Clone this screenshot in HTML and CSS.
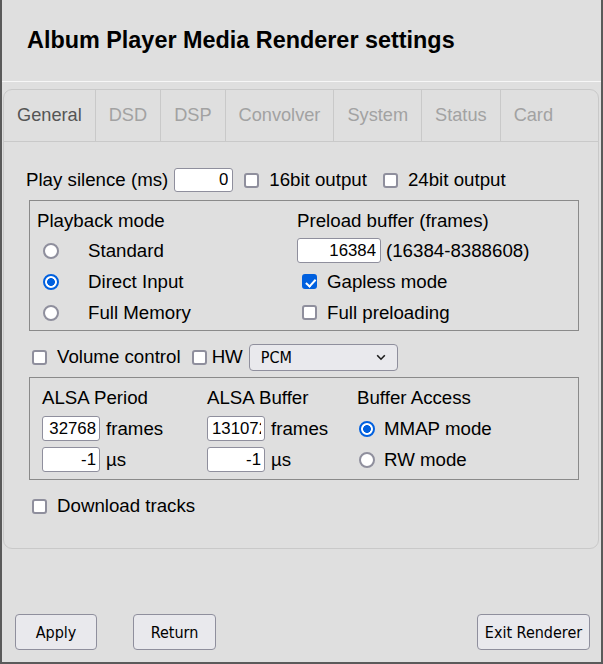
FILE: index.html
```html
<!DOCTYPE html>
<html lang="en">

<head>
    <meta charset="UTF-8">
    <meta name="viewport" content="width=device-width, initial-scale=1.0">
    <title>Album Player Media Renderer settings</title>
    <link rel="stylesheet" href="styles.css">
</head>

<body>
    <div class="window">
        <div class="head">
            <h1>Album Player Media Renderer settings</h1>
        </div>

        <div class="panel">
            <ul class="tabs">
                <li class="active">General</li>
                <li>DSD</li>
                <li>DSP</li>
                <li>Convolver</li>
                <li>System</li>
                <li>Status</li>
                <li>Card</li>
            </ul>

            <form class="page" id="generalForm">
                <div class="row first">
                    <label for="silence">Play silence (ms)</label>
                    <input type="text" class="num silence" id="silence" name="silence" value="0">
                    <label class="check"><input type="checkbox" name="out16"> 16bit output</label>
                    <label class="check"><input type="checkbox" name="out24"> 24bit output</label>
                </div>

                <div class="box playback">
                    <div class="cell">Playback mode</div>
                    <div class="cell">Preload buffer (frames)</div>

                    <label class="opt"><input type="radio" name="mode" value="standard"> Standard</label>
                    <div class="cell">
                        <input type="text" class="num preload" name="preload" value="16384">
                        <span class="range">(16384-8388608)</span>
                    </div>

                    <label class="opt"><input type="radio" name="mode" value="direct" checked> Direct Input</label>
                    <label class="check"><input type="checkbox" name="gapless" checked> Gapless mode</label>

                    <label class="opt"><input type="radio" name="mode" value="memory"> Full Memory</label>
                    <label class="check"><input type="checkbox" name="fullpreload"> Full preloading</label>
                </div>

                <div class="row volume">
                    <label class="check"><input type="checkbox" name="volume"> Volume control</label>
                    <label class="check hw"><input type="checkbox" name="hw"> HW</label>
                    <span class="select-wrap">
                        <select name="mixer">
                            <option>PCM</option>
                            <option>Master</option>
                            <option>Digital</option>
                        </select>
                        <svg class="chev" width="10" height="7" viewBox="0 0 10 7">
                            <path d="M1.2 1.2 L5 5.2 L8.8 1.2" fill="none" stroke="#1b1b1b" stroke-width="1.6" />
                        </svg>
                    </span>
                </div>

                <div class="box alsa">
                    <div class="cell">ALSA Period</div>
                    <div class="cell">ALSA Buffer</div>
                    <div class="cell">Buffer Access</div>

                    <div class="cell">
                        <input type="text" class="num small" name="period" value="32768"> frames
                    </div>
                    <div class="cell">
                        <input type="text" class="num small" name="buffer" value="131072"> frames
                    </div>
                    <label class="opt access"><input type="radio" name="access" value="mmap" checked> MMAP mode</label>

                    <div class="cell">
                        <input type="text" class="num small" name="periodus" value="-1"> µs
                    </div>
                    <div class="cell">
                        <input type="text" class="num small" name="bufferus" value="-1"> µs
                    </div>
                    <label class="opt access"><input type="radio" name="access" value="rw"> RW mode</label>
                </div>

                <div class="row download">
                    <label class="check"><input type="checkbox" name="download"> Download tracks</label>
                </div>
            </form>
        </div>

        <div class="actions">
            <button type="button" class="apply">Apply</button>
            <button type="button" class="return">Return</button>
            <button type="button" class="exit">Exit Renderer</button>
        </div>
    </div>
</body>

</html>
```

FILE: styles.css
```css
body {
    margin: 0;
    background-color: #dfdfdf;
    font-family: "Liberation Sans", Arial, sans-serif;
    font-size: 18.7px;
    color: #000;
}

.window {
    height: 100vh;
    box-sizing: border-box;
    border: 2px solid #5a5a5a;
    border-top: none;
    display: flex;
    flex-direction: column;
}

.head {
    height: 81px;
    flex-shrink: 0;
    display: flex;
    align-items: center;
    padding-left: 25px;
    border-bottom: 1px solid #f7f7f7;
}

.head h1 {
    margin: 0;
    font-size: 23.4px;
    font-weight: bold;
}

/* tabbed panel */
.panel {
    margin: 7px 2px 0 1px;
    border: 1px solid #c9c9c9;
    border-radius: 9px;
}

.tabs {
    display: flex;
    list-style: none;
    margin: 0;
    padding: 0;
    height: 51px;
    border-bottom: 1px solid #c9c9c9;
}

.tabs li {
    display: flex;
    align-items: center;
    padding: 0 13px;
    border-right: 1px solid #c9c9c9;
    color: #a2a2a2;
    font-size: 18.2px;
    cursor: pointer;
}

.tabs li.active {
    color: #555;
}

.tabs li:last-child {
    border-right: none;
}

.page {
    margin: 0;
    padding: 25px 20px 29px 22px;
}

.row {
    display: flex;
    align-items: center;
    height: 26px;
}

/* form controls */
.num {
    box-sizing: border-box;
    height: 24px;
    margin: 0;
    padding: 0 4px;
    border: 1px solid #8f8f9d;
    border-radius: 3px;
    background: #fff;
    font-family: "Liberation Sans", Arial, sans-serif;
    font-size: 16.8px;
    text-align: right;
    color: #000;
}

.check,
.opt {
    display: flex;
    align-items: center;
}

input[type="checkbox"],
input[type="radio"] {
    appearance: none;
    -webkit-appearance: none;
    position: relative;
    margin: 0;
    flex-shrink: 0;
    box-sizing: border-box;
    background: #fff;
    border: 2px solid #8f8f9d;
}

input[type="checkbox"] {
    width: 15px;
    height: 15px;
    border-radius: 3px;
    margin-right: 10px;
}

input[type="checkbox"]:checked {
    background: #0060df;
    border-color: #0060df;
}

input[type="checkbox"]:checked::after {
    content: "";
    position: absolute;
    left: 3.5px;
    top: 0.5px;
    width: 3.5px;
    height: 7.5px;
    border: solid #fff;
    border-width: 0 2px 2px 0;
    transform: rotate(42deg);
}

input[type="radio"] {
    width: 16px;
    height: 16px;
    border-radius: 50%;
}

input[type="radio"]:checked {
    border-color: #0060df;
    background: radial-gradient(circle, #0060df 0 3.6px, #fff 4.2px);
}

.first .silence {
    width: 59px;
    margin-left: 6px;
}

.first .check {
    margin-left: 11px;
}

.first .check + .check {
    margin-left: 16px;
}

/* framed groups */
.box {
    display: grid;
    box-sizing: border-box;
    width: 550px;
    margin-left: 3px;
    border: 1px solid #8a8a8a;
}

.cell {
    display: flex;
    align-items: center;
}

.playback {
    margin-top: 7px;
    padding: 5px 0 2px 7px;
    grid-template-columns: 260px 1fr;
    grid-template-rows: 29px 31px 31px 31px;
}

.playback .opt input {
    margin: 0 29px 0 6px;
}

.playback .check input {
    margin-left: 5px;
}

.preload {
    width: 84px;
    height: 25px;
}

.range {
    margin-left: 5px;
}

.volume {
    margin-top: 13px;
}

.volume .check input,
.download .check input {
    margin-left: 6px;
}

.volume .hw {
    margin-left: 5px;
}

.volume .hw input {
    margin-right: 5px;
}

.select-wrap {
    position: relative;
    margin-left: 6px;
}

.select-wrap select {
    appearance: none;
    -webkit-appearance: none;
    display: block;
    box-sizing: border-box;
    width: 149px;
    height: 27px;
    padding: 0 0 0 11px;
    border: 1px solid #8f8f9d;
    border-radius: 4px;
    background: #e9e9ed;
    font-family: "DejaVu Sans Condensed", "DejaVu Sans", sans-serif;
    font-stretch: condensed;
    font-size: 16px;
    color: #000;
}

.chev {
    position: absolute;
    right: 12px;
    top: 10px;
    pointer-events: none;
}

.alsa {
    margin-top: 7px;
    padding: 5px 0 4px 12px;
    grid-template-columns: 165px 150px 1fr;
    grid-template-rows: 30px 31px 31px;
}

.small {
    width: 58px;
    height: 25px;
    margin-right: 6px;
    padding: 0 3px 0 4px;
}

.alsa .opt input {
    margin: 0 9px 0 2px;
}

.download {
    margin-top: 13px;
}

/* bottom buttons */
.actions {
    margin-top: auto;
    display: flex;
    padding: 0 11px 12px 13px;
}

.actions button {
    height: 36px;
    padding: 0;
    border: 1px solid #8f8f9d;
    border-radius: 4px;
    background-color: #e9e9ed;
    font-family: "DejaVu Sans Condensed", "DejaVu Sans", sans-serif;
    font-stretch: condensed;
    font-size: 16px;
    color: #000;
    cursor: pointer;
}

.actions button:hover {
    background-color: #d0d0d7;
}

.apply {
    width: 82px;
}

.return {
    width: 83px;
    margin-left: 36px;
}

.exit {
    width: 113px;
    margin-left: auto;
}
```
